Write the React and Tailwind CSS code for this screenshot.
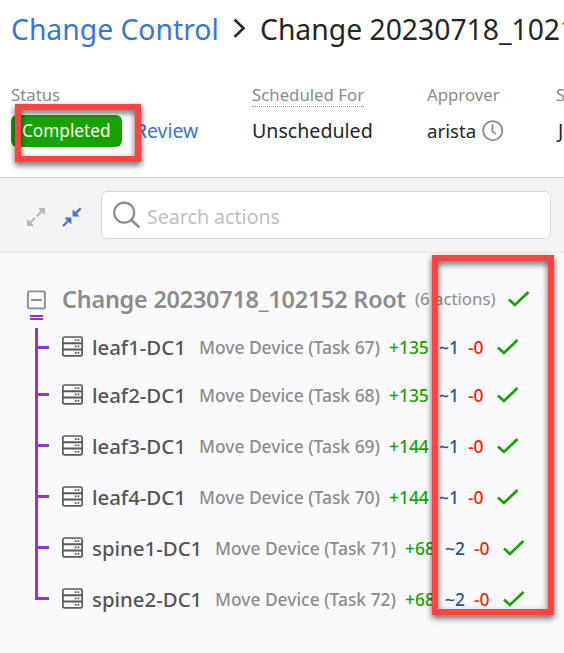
import React from "react";

const devices = [
  { name: "leaf1-DC1", task: 67, added: 135, changed: 1 },
  { name: "leaf2-DC1", task: 68, added: 135, changed: 1 },
  { name: "leaf3-DC1", task: 69, added: 144, changed: 1 },
  { name: "leaf4-DC1", task: 70, added: 144, changed: 1 },
  { name: "spine1-DC1", task: 71, added: 68, changed: 2 },
  { name: "spine2-DC1", task: 72, added: 68, changed: 2 },
];

function Check() {
  return (
    <svg className="h-[18px] w-[22px] shrink-0" viewBox="0 0 22 18" fill="none" stroke="#17a303" strokeWidth="2.7">
      <path d="M1 9.4 6.9 15 20.5 2" />
    </svg>
  );
}

function ServerIcon() {
  return (
    <svg className="h-[21px] w-[21px] shrink-0" viewBox="0 0 21 21" fill="none" stroke="#59595b" strokeWidth="1.7">
      <rect x=".85" y="1" width="19.3" height="18.8" rx="1.8" />
      <path d="M1 7.2h19M1 13.6h19" strokeWidth="2" />
      <path d="M12.8 4.2h1.7M15.6 4.2h1.7M12.8 10.4h1.7M15.6 10.4h1.7M12.8 16.8h1.7M15.6 16.8h1.7" strokeWidth="1.7" />
    </svg>
  );
}

function Field({ label, dotted, className, children }) {
  return (
    <div className={"flex shrink-0 flex-col items-start " + className}>
      <div
        className={
          "h-[24px] text-[16.8px] leading-[24px] text-[#8c8c8c] " +
          (dotted ? "border-b border-dotted border-[#8c8c8c]" : "")
        }
      >
        {label}
      </div>
      <div className="mt-2 flex h-[32px] items-center text-[19.6px] leading-[32px] text-[#262626]">{children}</div>
    </div>
  );
}

function DeviceRow({ device, first, last }) {
  const spine = device.name.startsWith("spine");
  return (
    <div className={"flex " + (first ? "h-[41px]" : "h-[51px]")}>
      <div className="flex w-[27px] shrink-0 flex-col">
        <div className={"w-[14px] border-b-[3px] border-l-[3px] border-[#8d38c9] " + (first ? "h-[21px]" : "h-[27px]")} />
        {!last && <div className="w-[3px] flex-1 bg-[#8d38c9]" />}
      </div>
      <div className={"flex items-center " + (first ? "pb-1" : "")}>
        <ServerIcon />
        <div
          className={
            "ml-[9px] mt-[2px] shrink-0 text-[20.4px] font-medium leading-[29px] text-[#555557] " +
            (spine ? "w-[123px]" : "w-[107px]")
          }
        >
          {device.name}
        </div>
        <div className="mt-[2px] flex shrink-0 items-center text-[17.4px] font-medium leading-[29px]">
          <span className="w-[190px] text-[#8c8c8c]">Move Device (Task {device.task})</span>
          <span className={"text-[#17a303] " + (spine ? "w-[40px]" : "w-[50px]")}>+{device.added}</span>
          <span className="w-[29px] text-[#2b5199]">~{device.changed}</span>
          <span className="w-[29px] text-[#f5220b]">-0</span>
        </div>
        <Check />
      </div>
    </div>
  );
}

export default function App() {
  return (
    <div className="relative h-[653px] w-[564px] overflow-hidden whitespace-nowrap bg-[#fafafc] font-['Noto_Sans',sans-serif]">
      <header className="h-[178px] border-b border-[#d9d9d9] bg-white pl-[11px] pt-[9px]">
        <div className="flex h-[40px] items-center text-[28.3px] leading-[40px] text-[#262626]">
          <a className="w-[222px] shrink-0 text-[#3a76d0]">Change Control</a>
          <svg className="mr-[14px] h-[20px] w-[13px] shrink-0" viewBox="0 0 13 20" fill="none" stroke="#262626" strokeWidth="2.6">
            <path d="M1.5 .5 10.5 9.2 1.5 17.9" />
          </svg>
          <span>Change 20230718_102152</span>
        </div>
        <div className="mt-[34px] flex">
          <Field label="Status" className="w-[241px]">
            <span className="flex h-[32px] w-[111px] items-center rounded-[6px] bg-[#17a303] pl-[11px] text-[17.2px] text-white">
              Completed
            </span>
            <a className="ml-[13px] text-[19.4px] text-[#3a76d0]">Review</a>
          </Field>
          <Field label="Scheduled For" dotted className="w-[175px]">
            Unscheduled
          </Field>
          <Field label="Approver" className="w-[129px]">
            <span className="w-[55px] text-[18.7px]">arista</span>
            <svg className="h-[22px] w-[22px]" viewBox="0 0 22 22" fill="none" stroke="#8c8c8c" strokeWidth="1.8">
              <circle cx="10.7" cy="10.7" r="9.6" />
              <path d="M10.4 4.2v7l3.3 2.7" />
            </svg>
          </Field>
          <Field label="S" className="w-[8px]">
            <span className="ml-[2px]">J</span>
          </Field>
        </div>
      </header>

      <div className="flex h-[75px] items-center border-b border-[#e6e6e8] bg-[#f4f4f7] pl-[26px]">
        <svg className="mt-[3px] h-[20px] w-[20px]" viewBox="0 0 20 20" fill="#b8b8ba" stroke="#b8b8ba" strokeWidth="2.2">
          <path d="M10.8 9.2 16 4M9 11 4 16" />
          <path d="M12.4 1h6.6v6.6l-2.2-1.4-3-3zM1 12.4V19h6.6l-1.4-2.2-3-3z" stroke="none" />
        </svg>
        <svg className="ml-4 mt-[3px] h-[20px] w-[20px]" viewBox="0 0 20 20" fill="#3a76d0" stroke="#3a76d0" strokeWidth="2.2">
          <path d="M13 7 18.6 1.4M7 13 1 19" />
          <path d="M10.6 2.6v6.8h6.8l-1.8-2.2-2.8-2.8zM9.4 17.4v-6.8H2.6l1.8 2.2 2.8 2.8z" stroke="none" />
        </svg>
        <div className="ml-[19px] flex h-[48px] w-[450px] items-center rounded-[6px] border border-[#d9d9d9] bg-white pl-[11px] text-[19.6px] leading-[28px] text-[#bfbfbf]">
          <svg className="mr-[6px] h-[28px] w-[28px]" viewBox="0 0 28 28" fill="none" stroke="#8c8c8c" strokeWidth="2.2">
            <circle cx="11.2" cy="11.6" r="10" />
            <path d="M18.5 19 26.3 26.4" strokeWidth="2.6" />
          </svg>
          <span className="mt-[3px]">Search actions</span>
        </div>
      </div>

      <main>
        <div className="flex h-[75px] pl-[26px] pt-[36px]">
          <div className="flex w-[36px] shrink-0 flex-col">
            <svg className="mt-px h-[20px] w-[20px]" viewBox="0 0 20 20" fill="none" stroke="#8c8c8c" strokeWidth="2">
              <rect x="1.9" y="1.4" width="17" height="17" rx="1.6" strokeWidth="1.9" />
              <path d="M5 10h10.8" />
            </svg>
            <div className="ml-1 mt-[5px] h-[5px] w-[13px] border-y-2 border-[#8d38c9]" />
          </div>
          <div className="-mt-[6px] flex h-[32px] items-center text-[#8c8c8c]">
            <span className="w-[353px] text-[23.4px] font-semibold leading-[32px] tracking-[-0.21px]">
              Change 20230718_102152 Root
            </span>
            <span className="w-[93px] text-[16.8px]">(6 actions)</span>
            <Check />
          </div>
        </div>
        <div className="pl-[35px]">
          {devices.map((d, i) => (
            <DeviceRow key={d.name} device={d} first={i === 0} last={i === devices.length - 1} />
          ))}
        </div>
      </main>

      <div className="absolute left-[15px] top-[104px] h-[58px] w-[126px] border-[6px] border-[#ff4242] drop-shadow-[0_3px_3px_rgba(0,0,0,0.65)]" />
      <div className="absolute left-[432px] top-[255px] h-[360px] w-[122px] border-[6px] border-[#ff4242] drop-shadow-[0_3px_3px_rgba(0,0,0,0.65)]" />
    </div>
  );
}
